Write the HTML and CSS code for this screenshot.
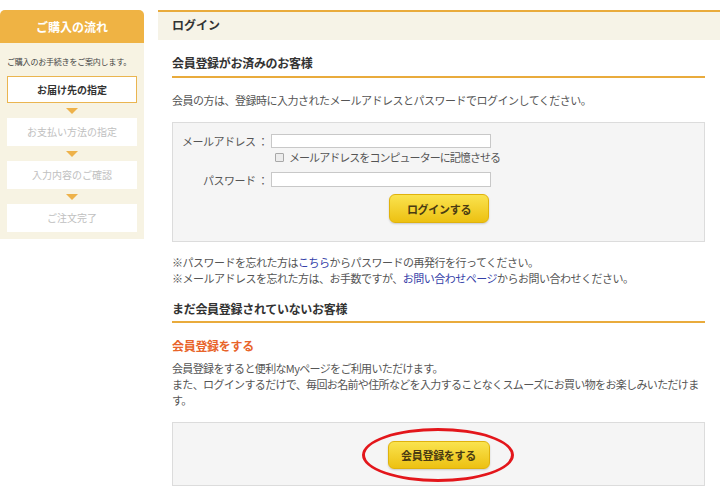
FILE: index.html
```html
<!DOCTYPE html>
<html lang="ja">
<head>
<meta charset="utf-8">
<title>ログイン</title>
<link rel="stylesheet" href="styles.css">
</head>
<body>
<div class="page">
  <aside class="sidebar">
    <div class="side-head">ご購入の流れ</div>
    <p class="side-intro">ご購入のお手続きをご案内します。</p>
    <ol class="steps">
      <li class="step current">お届け先の指定</li>
      <li class="arrow"><span></span></li>
      <li class="step">お支払い方法の指定</li>
      <li class="arrow"><span></span></li>
      <li class="step">入力内容のご確認</li>
      <li class="arrow"><span></span></li>
      <li class="step">ご注文完了</li>
    </ol>
  </aside>
  <main class="main">
    <div class="main-head">ログイン</div>
    <div class="content">
      <h2 class="sec-title">会員登録がお済みのお客様</h2>
      <p class="text lead">会員の方は、登録時に入力されたメールアドレスとパスワードでログインしてください。</p>
      <form class="login-box">
        <label class="label" for="mail">メールアドレス ：</label>
        <input class="field" id="mail" type="text">
        <label class="remember"><input class="check" type="checkbox">メールアドレスをコンピューターに記憶させる</label>
        <label class="label pw" for="pw">パスワード ：</label>
        <input class="field pw" id="pw" type="password">
        <button class="btn login-btn" type="button">ログインする</button>
      </form>
      <p class="text notes">※パスワードを忘れた方は<a class="link" href="#">こちら</a>からパスワードの再発行を行ってください。<br>※メールアドレスを忘れた方は、お手数ですが、<a class="link" href="#">お問い合わせページ</a>からお問い合わせください。</p>
      <h2 class="sec-title second">まだ会員登録されていないお客様</h2>
      <h3 class="sub-title">会員登録をする</h3>
      <p class="text desc">会員登録をすると便利なMyページをご利用いただけます。<br>また、ログインするだけで、毎回お名前や住所などを入力することなくスムーズにお買い物をお楽しみいただけます。</p>
      <div class="cta-box">
        <span class="cta-wrap">
          <button class="btn" type="button">会員登録をする</button>
          <span class="ellipse"></span>
        </span>
      </div>
    </div>
  </main>
</div>
</body>
</html>
```

FILE: styles.css
```css
* { box-sizing: border-box; }
body {
  margin: 0;
  background: #fff;
  font-family: "Noto Sans CJK JP", "Noto Sans", sans-serif;
  color: #555;
  font-size: 11px;
  letter-spacing: -0.5px;
}
.page {
  display: flex;
  align-items: flex-start;
  padding-top: 10px;
  width: 720px;
}

/* sidebar */
.sidebar {
  width: 144px;
  flex: none;
  background: #f7f3e3;
  border-radius: 5px 5px 0 0;
  padding-bottom: 7px;
}
.side-head {
  height: 33px;
  line-height: 33px;
  background: #efb344;
  color: #fff;
  font-weight: bold;
  font-size: 12px;
  text-align: center;
  border-radius: 5px 5px 0 0;
  letter-spacing: 0;
}
.side-intro {
  margin: 14px 0 9px 7px;
  font-size: 8px;
  line-height: 10px;
  color: #444;
  letter-spacing: -0.2px;
}
.steps {
  list-style: none;
  margin: 0;
  padding: 0 7px;
}
.step {
  height: 28px;
  line-height: 28px;
  background: #fff;
  color: #c0c0c0;
  text-align: center;
  font-size: 10px;
  letter-spacing: 0;
}
.step.current {
  height: 27px;
  line-height: 25px;
  border: 1px solid #eab550;
  color: #333;
  font-weight: bold;
}
.arrow {
  height: 15px;
  display: flex;
  align-items: center;
  justify-content: center;
}
.arrow span {
  width: 0;
  height: 0;
  border-left: 6px solid transparent;
  border-right: 6px solid transparent;
  border-top: 6px solid #eeb24a;
}

/* main */
.main {
  flex: 1;
  margin-left: 14px;
}
.main-head {
  border-top: 2px solid #e9ab3c;
  background: #f6f3e7;
  height: 30px;
  line-height: 26px;
  padding-left: 14px;
  font-weight: bold;
  font-size: 12px;
  color: #333;
  letter-spacing: 0;
}
.content {
  padding: 0 15px 0 14px;
}
.sec-title {
  margin: 14px 0 0;
  font-size: 12px;
  line-height: 18px;
  font-weight: bold;
  color: #333;
  letter-spacing: -0.3px;
  padding-bottom: 4px;
  border-bottom: 2px solid #e9ab3c;
}
.sec-title.second {
  padding-bottom: 3px;
}
.text {
  margin: 0;
  line-height: 16px;
}
.lead {
  margin-top: 14px;
}

/* login form */
.login-box {
  margin-top: 14px;
  background: #f5f5f5;
  border: 1px solid #dcdcdc;
  padding: 11px 0 18px;
  display: grid;
  grid-template-columns: 95px 220px;
  column-gap: 3px;
  align-items: center;
}
.label {
  text-align: right;
  color: #555;
  line-height: 14px;
  white-space: nowrap;
}
.field {
  height: 14px;
  border: 1px solid #c8c8c8;
  background: #fff;
  margin: 0;
  padding: 0 2px;
  font: inherit;
}
.label.pw, .field.pw {
  margin-top: 8px;
}
.field.pw {
  height: 15px;
}
.remember {
  grid-column: 2;
  display: flex;
  align-items: center;
  height: 14px;
  margin-top: 2px;
  white-space: nowrap;
  letter-spacing: -0.95px;
}
.check {
  appearance: none;
  -webkit-appearance: none;
  width: 9px;
  height: 9px;
  margin: 0 5px 0 4px;
  border: 1px solid #a8a8a8;
  border-radius: 1px;
  background: #ececec;
  flex: none;
}
.btn {
  width: 100px;
  height: 29px;
  border: 1px solid #e0b20c;
  border-radius: 6px;
  background: linear-gradient(#fae34f, #edc112);
  box-shadow: 0 1px 2px rgba(0, 0, 0, 0.18);
  color: #4a3b12;
  font-family: inherit;
  font-weight: bold;
  font-size: 11px;
  letter-spacing: -0.3px;
  padding: 0;
}
.login-btn {
  grid-column: 2;
  justify-self: end;
  margin: 7px 2px 0 0;
}

.notes {
  margin-top: 12px;
}
.link {
  color: #3440a8;
  text-decoration: none;
}
.sec-title.second {
  margin-top: 14px;
}
.sub-title {
  margin: 14px 0 0;
  font-size: 12px;
  line-height: 18px;
  font-weight: bold;
  color: #e8642a;
  letter-spacing: -0.3px;
}
.desc {
  margin-top: 5px;
  letter-spacing: -0.65px;
}
.cta-box {
  margin-top: 14px;
  background: #f5f5f5;
  border: 1px solid #dcdcdc;
  padding: 18px 0 16px;
  text-align: center;
}
.cta-wrap {
  position: relative;
  display: inline-block;
  vertical-align: top;
}
.cta-wrap .btn {
  display: block;
  width: 102px;
  height: 28px;
}
.ellipse {
  position: absolute;
  left: -26px;
  top: -13px;
  width: 152px;
  height: 54px;
  border: 3px solid #e3161b;
  border-radius: 50%;
  pointer-events: none;
}
```
